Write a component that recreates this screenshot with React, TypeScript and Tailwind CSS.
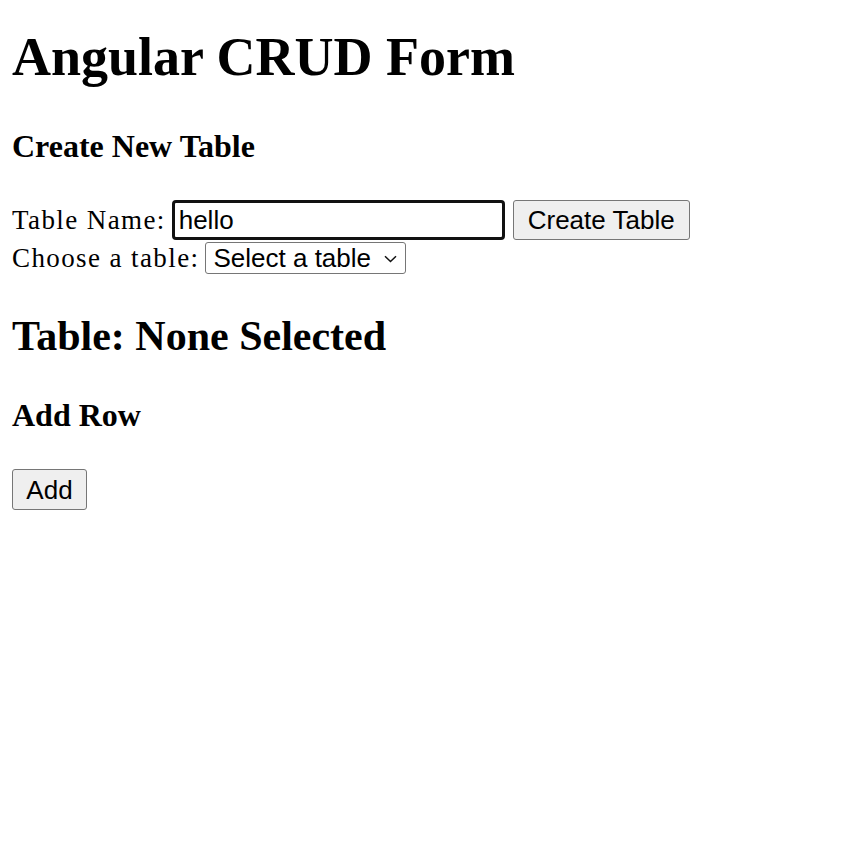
import { useState } from 'react';

export default function App() {
  const [tableName, setTableName] = useState('hello');
  const [selected, setSelected] = useState('');

  return (
    <div className="min-h-screen bg-white px-[12px] pt-[26px] font-['Liberation_Serif',serif] text-black">
      <h1 className="text-[54px] leading-[62px] font-bold">Angular CRUD Form</h1>

      <h3 className="mt-[40px] text-[32px] leading-[37px] font-bold">Create New Table</h3>

      <div className="mt-[35px] flex h-[40px] items-center">
        <label htmlFor="tableName" className="text-[27px] leading-[40px] tracking-[1.4px]">
          Table Name:
        </label>
        <input
          id="tableName"
          value={tableName}
          onChange={(e) => setTableName(e.target.value)}
          className="ml-[6px] h-[40px] w-[333px] rounded-[4px] border-[3px] border-[#111111] bg-white pl-[4px] font-['Liberation_Sans',Arial,sans-serif] text-[26px] text-black outline-none"
        />
        <button className="ml-[8px] h-[40px] w-[177px] rounded-[3px] border border-[#767676] bg-[#efefef] font-['Liberation_Sans',Arial,sans-serif] text-[26px] leading-none text-black">
          Create Table
        </button>
      </div>

      <div className="mt-[2px] flex h-[32px] items-center">
        <label htmlFor="tableSelect" className="text-[27px] leading-[32px] tracking-[1.4px]">
          Choose a table:
        </label>
        <div className="relative ml-[6px] h-[32px] w-[201px]">
          <select
            id="tableSelect"
            value={selected}
            onChange={(e) => setSelected(e.target.value)}
            className="h-full w-full appearance-none rounded-[3px] border border-[#767676] bg-white pl-[7px] font-['Liberation_Sans',Arial,sans-serif] text-[26px] leading-none text-black outline-none"
          >
            <option value="">Select a table</option>
          </select>
          <svg
            className="pointer-events-none absolute right-[9px] top-[13px] h-[8px] w-[13px]"
            viewBox="0 0 13 8"
            fill="none"
            stroke="#111"
            strokeWidth="1.5"
          >
            <path d="M1 1.2 L6.5 6.5 L12 1.2" />
          </svg>
        </div>
      </div>

      <h2 className="mt-[38px] text-[42px] leading-[48px] font-bold">
        Table: {selected || 'None Selected'}
      </h2>

      <h3 className="mt-[37px] text-[32px] leading-[37px] font-bold">Add Row</h3>

      <button className="mt-[35px] h-[41px] w-[75px] rounded-[3px] border border-[#767676] bg-[#efefef] font-['Liberation_Sans',Arial,sans-serif] text-[26px] leading-none text-black">
        Add
      </button>
    </div>
  );
}
